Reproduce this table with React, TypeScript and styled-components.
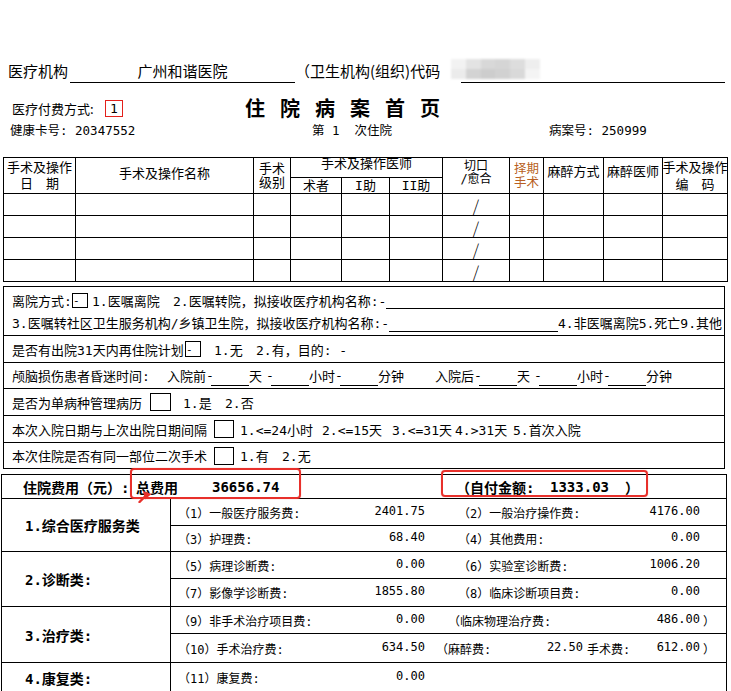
import React from "react";
import styled, { createGlobalStyle } from "styled-components";

const GlobalStyle = createGlobalStyle`
  html, body { margin: 0; padding: 0; background: #ffffff; }
  body {
    font-family: "DejaVu Sans Mono", "Noto Sans CJK SC", monospace;
    color: #000;
  }
`;

const Page = styled.div`
  position: relative;
  width: 731px;
  height: 691px;
  overflow: hidden;
  background: #fff;
`;

/* ---------- header ---------- */
const OrgRow = styled.div`
  display: flex;
  height: 22px;
  margin-top: 61px;
  padding-left: 8px;
  font-family: "Noto Sans CJK SC", sans-serif;
  font-size: 15px;
`;

const OrgLabel = styled.div<{ $w: number }>`
  flex: none;
  width: ${(p) => p.$w}px;
  line-height: 20px;
  white-space: nowrap;
`;

const LineField = styled.div<{ $w: number }>`
  position: relative;
  flex: none;
  width: ${(p) => p.$w}px;
  height: 22px;
  box-sizing: border-box;
  border-bottom: 1px solid #000;
  text-align: center;
  line-height: 20px;
`;

const Mosaic = styled.div`
  position: absolute;
  left: -10px;
  top: -2px;
  width: 89px;
  height: 20px;
  display: grid;
  grid-template-columns: repeat(6, 1fr);
  grid-template-rows: repeat(2, 1fr);
  filter: blur(0.8px);
`;

const MosaicCell = styled.span<{ $c: string }>`
  background: ${(p) => p.$c};
`;

const PayRow = styled.div`
  display: flex;
  align-items: center;
  height: 22px;
  margin-top: 14px;
  padding-left: 12px;
  font-size: 13px;
`;

const PayLabel = styled.span`
  flex: none;
  width: 93px;
  font-family: "Noto Sans CJK SC", sans-serif;
`;

const PayBox = styled.span`
  flex: none;
  width: 18px;
  height: 17px;
  box-sizing: border-box;
  border: 1px solid #e3201b;
  display: flex;
  align-items: center;
  justify-content: center;
  font-size: 13px;
  line-height: 1;
`;

const Title = styled.h1`
  margin: 0 0 0 122px;
  font-family: "Noto Sans CJK SC", sans-serif;
  font-size: 20px;
  font-weight: 700;
  letter-spacing: 15px;
  line-height: 22px;
  white-space: nowrap;
`;

const InfoRow = styled.div`
  display: grid;
  grid-template-columns: 302px 237px 1fr;
  height: 18px;
  margin-top: 3px;
  padding-left: 10px;
  font-size: 12.5px;
  line-height: 18px;
  white-space: pre;
`;

/* ---------- operation table ---------- */
const OpGrid = styled.div`
  display: grid;
  width: 725px;
  margin: 17px 0 0 3px;
  box-sizing: border-box;
  grid-template-columns: 72px 178px 37px 51px 48px 53px 67px 34px 60px 59px 65px;
  grid-template-rows: 20px 16px repeat(4, 22px);
  border-left: 1px solid #000;
  border-top: 1px solid #000;
  font-size: 13px;
`;

const OpCell = styled.div<{
  $col?: string;
  $row?: string;
  $lh?: number;
  $fs?: number;
  $top?: number;
  $bottom?: number;
  $color?: string;
  $align?: string;
}>`
  box-sizing: border-box;
  grid-column: ${(p) => p.$col ?? "auto"};
  grid-row: ${(p) => p.$row ?? "auto"};
  border-right: 1px solid #000;
  border-bottom: 1px solid #000;
  display: flex;
  flex-direction: column;
  align-items: center;
  justify-content: ${(p) => p.$align ?? "center"};
  padding-top: ${(p) => p.$top ?? 0}px;
  padding-bottom: ${(p) => p.$bottom ?? 0}px;
  font-size: ${(p) => p.$fs ?? 13}px;
  line-height: ${(p) => p.$lh ?? 16}px;
  color: ${(p) => p.$color ?? "#000"};
  white-space: pre;
`;

const Slash = styled.span`
  font-family: "Noto Sans CJK SC", sans-serif;
  font-size: 16px;
  line-height: 18px;
  font-weight: 300;
`;

/* ---------- middle box ---------- */
const MidBox = styled.div`
  width: 722px;
  margin: 4px 0 0 3px;
  box-sizing: border-box;
  border: 1px solid #000;
  font-size: 13px;
`;

const MidBlock = styled.div`
  padding: 2px 0;
  border-bottom: 1px solid #000;
`;

const MidLine = styled.div<{ $h: number; $line?: boolean }>`
  display: flex;
  align-items: center;
  height: ${(p) => p.$h}px;
  box-sizing: border-box;
  padding-left: 8px;
  white-space: pre;
  border-bottom: ${(p) => (p.$line ? "1px solid #000" : "none")};
`;

const Seg = styled.span<{ $w?: number; $ml?: number; $mr?: number }>`
  flex: none;
  ${(p) => (p.$w ? `width: ${p.$w}px;` : "")}
  margin-left: ${(p) => p.$ml ?? 0}px;
  margin-right: ${(p) => p.$mr ?? 0}px;
`;

const Fill = styled.span<{ $h: number }>`
  flex: 1;
  align-self: flex-start;
  height: ${(p) => p.$h}px;
  border-bottom: 1px solid #000;
`;

const Blank = styled.span`
  flex: none;
  width: 38px;
  align-self: flex-start;
  height: 22px;
  border-bottom: 1px solid #000;
`;

const Dash = styled.span<{ $ml?: number }>`
  flex: none;
  width: 5px;
  margin-left: ${(p) => p.$ml ?? 0}px;
  overflow: visible;
`;

const CheckBox = styled.span<{ $w: number; $h: number }>`
  flex: none;
  width: ${(p) => p.$w}px;
  height: ${(p) => p.$h}px;
  box-sizing: border-box;
  border: 1px solid #000;
  display: flex;
  align-items: center;
  font-size: 11px;
  line-height: 1;
`;

/* ---------- fees ---------- */
const FeeWrap = styled.div`
  position: relative;
  width: 726px;
  margin: 5px 0 0 1px;
`;

const FeeGrid = styled.div`
  display: grid;
  width: 726px;
  box-sizing: border-box;
  grid-template-columns: 169px 556px;
  grid-template-rows: 24px 27px 26px 27px 28px 27px 29px 30px;
  border-left: 1px solid #000;
  border-top: 1px solid #000;
`;

const FeeHead = styled.div`
  grid-column: 1 / 3;
  grid-row: 1;
  box-sizing: border-box;
  border-right: 1px solid #000;
  border-bottom: 1px solid #000;
  display: flex;
  align-items: center;
  padding-left: 21px;
  font-size: 14px;
  font-weight: 700;
  white-space: pre;
`;

const HeadSeg = styled.span<{ $w?: number }>`
  flex: none;
  ${(p) => (p.$w ? `width: ${p.$w}px;` : "")}
`;

const FeeCat = styled.div<{ $row: string }>`
  grid-column: 1;
  grid-row: ${(p) => p.$row};
  box-sizing: border-box;
  border-right: 1px solid #000;
  border-bottom: 1px solid #000;
  display: flex;
  align-items: center;
  padding-left: 23px;
  font-size: 14px;
  font-weight: 700;
  white-space: pre;
`;

const FeeCell = styled.div<{ $row: number }>`
  grid-column: 2;
  grid-row: ${(p) => p.$row};
  box-sizing: border-box;
  border-right: 1px solid #000;
  border-bottom: 1px solid #000;
  display: flex;
  align-items: center;
  font-size: 12px;
  white-space: pre;
`;

const FeeItem = styled.div<{ $w: number; $ml: number }>`
  flex: none;
  width: ${(p) => p.$w}px;
  margin-left: ${(p) => p.$ml}px;
  display: flex;
  justify-content: space-between;
`;

const Tail = styled.span`
  margin-left: 3px;
`;

const RedMark = styled.div<{ $l: number; $t: number; $w: number; $h: number }>`
  position: absolute;
  left: ${(p) => p.$l}px;
  top: ${(p) => p.$t}px;
  width: ${(p) => p.$w}px;
  height: ${(p) => p.$h}px;
  box-sizing: border-box;
  border: 2px solid #e8302b;
  border-radius: 4px;
  box-shadow: 0 0 1px rgba(232, 48, 43, 0.6);
  pointer-events: none;
`;

const Arrow = styled.svg`
  position: absolute;
  left: 137px;
  top: 15px;
  width: 14px;
  height: 14px;
`;

const mosaic = [
  "#f2f2f2", "#e3e3e3", "#d8d8d8", "#d5d5d5", "#dddddd", "#eeeeee",
  "#ebebeb", "#d3d3d3", "#cdcdcd", "#d1d1d1", "#d9d9d9", "#f4f4f4",
];

export default function App() {
  const rows = [0, 1, 2, 3];
  return (
    <Page>
      <GlobalStyle />
      <OrgRow>
        <OrgLabel $w={62}>医疗机构</OrgLabel>
        <LineField $w={225}>广州和谐医院</LineField>
        <OrgLabel $w={166}>（卫生机构(组织)代码</OrgLabel>
        <LineField $w={264}>
          <Mosaic>
            {mosaic.map((c, i) => (
              <MosaicCell key={i} $c={c} />
            ))}
          </Mosaic>
        </LineField>
      </OrgRow>

      <PayRow>
        <PayLabel>医疗付费方式:</PayLabel>
        <PayBox>1</PayBox>
        <Title>住院病案首页</Title>
      </PayRow>

      <InfoRow>
        <span>健康卡号: 20347552</span>
        <span>第 1  次住院</span>
        <span>病案号: 250999</span>
      </InfoRow>

      <OpGrid>
        <OpCell $col="1" $row="1 / 3">
          <span>手术及操作</span>
          <span>日　期</span>
        </OpCell>
        <OpCell $col="2" $row="1 / 3" $bottom={4}>手术及操作名称</OpCell>
        <OpCell $col="3" $row="1 / 3" $lh={14}>
          <span>手术</span>
          <span>级别</span>
        </OpCell>
        <OpCell $col="4 / 7" $row="1" $align="flex-start" $lh={12} $top={0}>手术及操作医师</OpCell>
        <OpCell $col="4" $row="2" $lh={14}>术者</OpCell>
        <OpCell $col="5" $row="2" $lh={14}>I助</OpCell>
        <OpCell $col="6" $row="2" $lh={14}>II助</OpCell>
        <OpCell $col="7" $row="1 / 3" $fs={12} $lh={12.5} $align="flex-start" $top={2}>
          <span>切口</span>
          <span>/愈合</span>
        </OpCell>
        <OpCell $col="8" $row="1 / 3" $fs={12.5} $lh={14} $color="#b85f22">
          <span>择期</span>
          <span>手术</span>
        </OpCell>
        <OpCell $col="9" $row="1 / 3" $bottom={8}>麻醉方式</OpCell>
        <OpCell $col="10" $row="1 / 3" $bottom={8}>麻醉医师</OpCell>
        <OpCell $col="11" $row="1 / 3" $lh={17}>
          <span>手术及操作</span>
          <span>编　码</span>
        </OpCell>
        {rows.map((r) =>
          Array.from({ length: 11 }).map((_, c) => (
            <OpCell key={`${r}-${c}`}>{c === 6 ? <Slash>/</Slash> : null}</OpCell>
          ))
        )}
      </OpGrid>

      <MidBox>
        <MidBlock>
          <MidLine $h={22}>
            <Seg $w={60}>离院方式:</Seg>
            <CheckBox $w={16} $h={15}>-</CheckBox>
            <Seg $ml={4} $w={81}>1.医嘱离院</Seg>
            <Seg>2.医嘱转院，拟接收医疗机构名称:-</Seg>
            <Fill $h={19} />
          </MidLine>
          <MidLine $h={22}>
            <Seg>3.医嘱转社区卫生服务机构/乡镇卫生院，拟接收医疗机构名称:-</Seg>
            <Fill $h={20} />
            <Seg $mr={2}>4.非医嘱离院5.死亡9.其他</Seg>
          </MidLine>
        </MidBlock>
        <MidLine $h={27} $line>
          <Seg $w={173}>是否有出院31天内再住院计划</Seg>
          <CheckBox $w={16} $h={16}>-</CheckBox>
          <Seg $ml={13} $w={42}>1.无</Seg>
          <Seg>2.有，目的: -</Seg>
        </MidLine>
        <MidLine $h={26} $line>
          <Seg $w={155}>颅脑损伤患者昏迷时间:</Seg>
          <Seg>入院前</Seg>
          <Dash>-</Dash>
          <Blank />
          <Seg>天</Seg>
          <Dash $ml={4}>-</Dash>
          <Blank />
          <Seg>小时</Seg>
          <Dash>-</Dash>
          <Blank />
          <Seg>分钟</Seg>
          <Seg $ml={31}>入院后</Seg>
          <Dash>-</Dash>
          <Blank />
          <Seg>天</Seg>
          <Dash $ml={4}>-</Dash>
          <Blank />
          <Seg>小时</Seg>
          <Dash>-</Dash>
          <Blank />
          <Seg>分钟</Seg>
        </MidLine>
        <MidLine $h={27} $line>
          <Seg $w={138}>是否为单病种管理病历</Seg>
          <CheckBox $w={21} $h={18} />
          <Seg $ml={12} $w={42}>1.是</Seg>
          <Seg>2.否</Seg>
        </MidLine>
        <MidLine $h={27} $line>
          <Seg $w={202}>本次入院日期与上次出院日期间隔</Seg>
          <CheckBox $w={20} $h={18} />
          <Seg $ml={6} $w={82}>1.&lt;=24小时</Seg>
          <Seg $w={70}>2.&lt;=15天</Seg>
          <Seg $w={63}>3.&lt;=31天</Seg>
          <Seg $w={58}>4.&gt;31天</Seg>
          <Seg>5.首次入院</Seg>
        </MidLine>
        <MidLine $h={25}>
          <Seg $w={202}>本次住院是否有同一部位二次手术</Seg>
          <CheckBox $w={20} $h={18} />
          <Seg $ml={6} $w={42}>1.有</Seg>
          <Seg>2.无</Seg>
        </MidLine>
      </MidBox>

      <FeeWrap>
        <FeeGrid>
          <FeeHead>
            <HeadSeg $w={113}>住院费用（元）:</HeadSeg>
            <HeadSeg $w={76}>总费用</HeadSeg>
            <HeadSeg $w={244}>36656.74</HeadSeg>
            <HeadSeg $w={94}>（自付金额:</HeadSeg>
            <HeadSeg $w={75}>1333.03</HeadSeg>
            <HeadSeg>）</HeadSeg>
          </FeeHead>

          <FeeCat $row="2 / 4">1.综合医疗服务类</FeeCat>
          <FeeCell $row={2}>
            <FeeItem $w={247} $ml={7}><span>（1）一般医疗服务费:</span><span>2401.75</span></FeeItem>
            <FeeItem $w={242} $ml={33}><span>（2）一般治疗操作费:</span><span>4176.00</span></FeeItem>
          </FeeCell>
          <FeeCell $row={3}>
            <FeeItem $w={247} $ml={7}><span>（3）护理费:</span><span>68.40</span></FeeItem>
            <FeeItem $w={242} $ml={33}><span>（4）其他费用:</span><span>0.00</span></FeeItem>
          </FeeCell>

          <FeeCat $row="4 / 6">2.诊断类:</FeeCat>
          <FeeCell $row={4}>
            <FeeItem $w={247} $ml={7}><span>（5）病理诊断费:</span><span>0.00</span></FeeItem>
            <FeeItem $w={242} $ml={33}><span>（6）实验室诊断费:</span><span>1006.20</span></FeeItem>
          </FeeCell>
          <FeeCell $row={5}>
            <FeeItem $w={247} $ml={7}><span>（7）影像学诊断费:</span><span>1855.80</span></FeeItem>
            <FeeItem $w={242} $ml={33}><span>（8）临床诊断项目费:</span><span>0.00</span></FeeItem>
          </FeeCell>

          <FeeCat $row="6 / 8">3.治疗类:</FeeCat>
          <FeeCell $row={6}>
            <FeeItem $w={247} $ml={7}><span>（9）非手术治疗项目费:</span><span>0.00</span></FeeItem>
            <FeeItem $w={252} $ml={23}><span>（临床物理治疗费:</span><span>486.00</span></FeeItem>
            <Tail>）</Tail>
          </FeeCell>
          <FeeCell $row={7}>
            <FeeItem $w={247} $ml={7}><span>（10）手术治疗费:</span><span>634.50</span></FeeItem>
            <FeeItem $w={147} $ml={11}><span>（麻醉费:</span><span>22.50</span></FeeItem>
            <FeeItem $w={113} $ml={4}><span>手术费:</span><span>612.00</span></FeeItem>
            <Tail>）</Tail>
          </FeeCell>

          <FeeCat $row="8 / 9">4.康复类:</FeeCat>
          <FeeCell $row={8}>
            <FeeItem $w={247} $ml={7}><span>（11）康复费:</span><span>0.00</span></FeeItem>
          </FeeCell>
        </FeeGrid>

        <RedMark $l={129} $t={-6} $w={171} $h={31} />
        <RedMark $l={440} $t={-4} $w={207} $h={27} />
        <Arrow viewBox="0 0 14 14">
          <path d="M1.5 13 L8 6.5" stroke="#e8302b" strokeWidth="2.4" strokeLinecap="round" fill="none" />
          <polygon points="5,2 13.5,5 7,10.5" fill="#e8302b" />
        </Arrow>
      </FeeWrap>
    </Page>
  );
}
